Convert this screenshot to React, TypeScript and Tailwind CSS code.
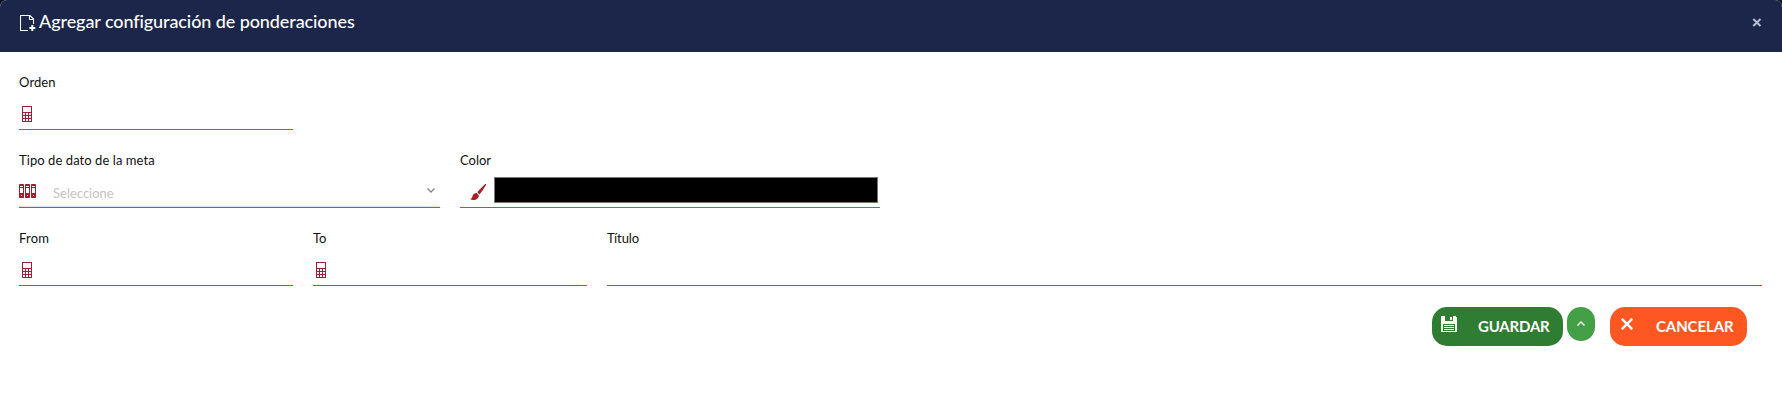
import type { ReactNode } from "react";

function CalculatorIcon() {
  return (
    <svg className="ml-[3px] h-4 w-[10px] shrink-0" viewBox="0 0 10 16" fill="none" stroke="#9f1d35" shapeRendering="crispEdges">
      <rect x="0.5" y="0.5" width="9" height="15" />
      <path d="M0 6.5h10M0 9.5h10M0 12.5h10M3.5 6v10M6.5 6v10" />
    </svg>
  );
}

function BindersIcon() {
  return (
    <svg className="h-[14px] w-[17px] shrink-0" viewBox="0 0 17 14">
      {[0, 6, 12].map((x) => (
        <g key={x} transform={`translate(${x} 0)`}>
          <rect width="5" height="14" rx="0.8" fill="#a21c30" />
          <rect x="1" y="2" width="3" height="1" fill="#fff" />
          <rect x="1" y="4" width="3" height="5" fill="#fff" />
          <rect x="2" y="11" width="1" height="1" fill="#fff" />
        </g>
      ))}
    </svg>
  );
}

function BrushIcon() {
  return (
    <svg className="h-4 w-4 shrink-0" viewBox="0 0 16 16" fill="#a3202c">
      <path d="M15.8.1c.5.4.2 1-.1 1.5-1.800 3.100-4.100 6.400-6.200 8.900L7.300 8.300C9.600 5.500 12.300 2.500 14.700.4c.4-.3.800-.5 1.100-.3zM6.700 9.100l2.100 2.100c.1 1.800-.8 3.500-2.700 4.200-2 .8-4.500.7-6.100-.5 1.500-.2 2-1 2.400-2.500.5-2.200 2.300-3.500 4.300-3.300z" />
    </svg>
  );
}

function FilePlusIcon() {
  return (
    <svg className="h-[17px] w-4 shrink-0" viewBox="0 0 16 17" fill="none" stroke="#fff">
      <path d="M8 15.500H.5V.5H10L13.500 4v5M9.500.5v4h4" strokeWidth="1.100" />
      <path d="M12.300 10v6M9.300 13h6" strokeWidth="2" />
    </svg>
  );
}

function SaveIcon() {
  return (
    <svg className="h-4 w-4 shrink-0" viewBox="0 0 16 16" shapeRendering="crispEdges">
      <path d="M0 0h14l2 2v14H0z" fill="#fff" />
      <path d="M4 0h8v5H4zM2 8h12v7H2z" fill="#2e7d32" />
      <path d="M9 1h2v3H9zM3 9h10v1H3zM3 11h10v1H3zM3 13h10v1H3z" fill="#fff" />
    </svg>
  );
}

function Field({ label, tracking, width, children }: { label: string; tracking: string; width: string; children?: ReactNode }) {
  return (
    <div className={`flex h-14 flex-col border-b border-[#d0492a] ${width}`}>
      <label className={`h-[18px] text-[13px] leading-4 whitespace-nowrap text-[#111] ${tracking}`}>{label}</label>
      <div className="flex min-h-0 grow">{children}</div>
    </div>
  );
}

export default function App() {
  return (
    <div className="h-[406px] w-full bg-[#10131f] font-['Lato',sans-serif]">
      <div className="flex h-full flex-col overflow-hidden rounded-t-[7px] bg-white">
        <header className="flex h-[52px] shrink-0 items-start justify-between bg-[#1b264a] pr-5 pl-5">
          <div className="flex pt-[15px]">
            <FilePlusIcon />
            <h1 className="ml-[3px] -mt-[6px] text-[18px] leading-6 font-medium tracking-[-0.09px] whitespace-nowrap text-white">
              Agregar configuración de ponderaciones
            </h1>
          </div>
          <button className="mt-[18px]" aria-label="Cerrar">
            <svg className="h-[9px] w-[10px]" viewBox="0 0 10 9" stroke="#b7bdca" strokeWidth="2">
              <path d="M1.300 1l7.200 7M8.500 1L1.300 8" />
            </svg>
          </button>
        </header>

        <main className="flex flex-col gap-[22px] pt-[22px] pr-5 pl-[19px]">
          <div className="flex">
            <Field label="Orden" tracking="tracking-[0.1px]" width="w-[274px]">
              <div className="pt-[14px]"><CalculatorIcon /></div>
            </Field>
          </div>
          <div className="flex gap-5">
            <Field label="Tipo de dato de la meta" tracking="tracking-[0.07px]" width="w-[421px]">
              <div className="flex grow border-b border-[#dedede]">
                <div className="pt-[14px]"><BindersIcon /></div>
                <span className="ml-[17px] pt-[14px] text-[13px] leading-[18px] text-[#c4c4c4]">Seleccione</span>
                <svg className="mt-[18px] mr-[5px] ml-auto h-[5px] w-2" viewBox="0 0 8 5" fill="none" stroke="#858585" strokeWidth="1.400">
                  <path d="M.5.5L4 4 7.500.5" />
                </svg>
              </div>
            </Field>
            <Field label="Color" tracking="tracking-normal" width="w-[420px]">
              <div className="ml-[10px] pt-[14px]"><BrushIcon /></div>
              <div className="mt-[7px] mr-[2px] ml-2 h-[26px] grow border border-[#767676] bg-black" />
            </Field>
          </div>
          <div className="flex gap-5">
            <Field label="From" tracking="tracking-[0.2px]" width="w-[274px]">
              <div className="pt-[14px]"><CalculatorIcon /></div>
            </Field>
            <Field label="To" tracking="tracking-normal" width="w-[274px]">
              <div className="pt-[14px]"><CalculatorIcon /></div>
            </Field>
            <Field label="Título" tracking="tracking-[-0.1px]" width="w-[1155px]" />
          </div>
        </main>

        <footer className="mt-[21px] flex items-start justify-end pr-[35px] text-[15px] font-bold text-white">
          <button className="flex h-[39px] w-[131px] rounded-[15px] bg-[#2e7d32] pt-[9px] pl-[9px]">
            <SaveIcon />
            <span className="ml-[21px] leading-5 tracking-[-0.2px]">GUARDAR</span>
          </button>
          <button className="ml-1 flex h-[34px] w-7 justify-center rounded-[14px] bg-[#43a047] pt-[14px]" aria-label="Más opciones">
            <svg className="h-[5px] w-2" viewBox="0 0 8 5" fill="none" stroke="#fff" strokeWidth="1.400">
              <path d="M.5 4.500L4 1l3.500 3.500" />
            </svg>
          </button>
          <button className="ml-[15px] flex h-[39px] w-[137px] rounded-[15px] bg-[#ff5722] pt-[9px] pl-[11px]">
            <svg className="mt-[2px] h-3 w-3" viewBox="0 0 12 12" stroke="#fff" strokeWidth="2.400">
              <path d="M.8.8l10.400 10.400M11.200.8L.8 11.200" />
            </svg>
            <span className="ml-[23px] leading-5 tracking-[-0.1px]">CANCELAR</span>
          </button>
        </footer>
      </div>
    </div>
  );
}
